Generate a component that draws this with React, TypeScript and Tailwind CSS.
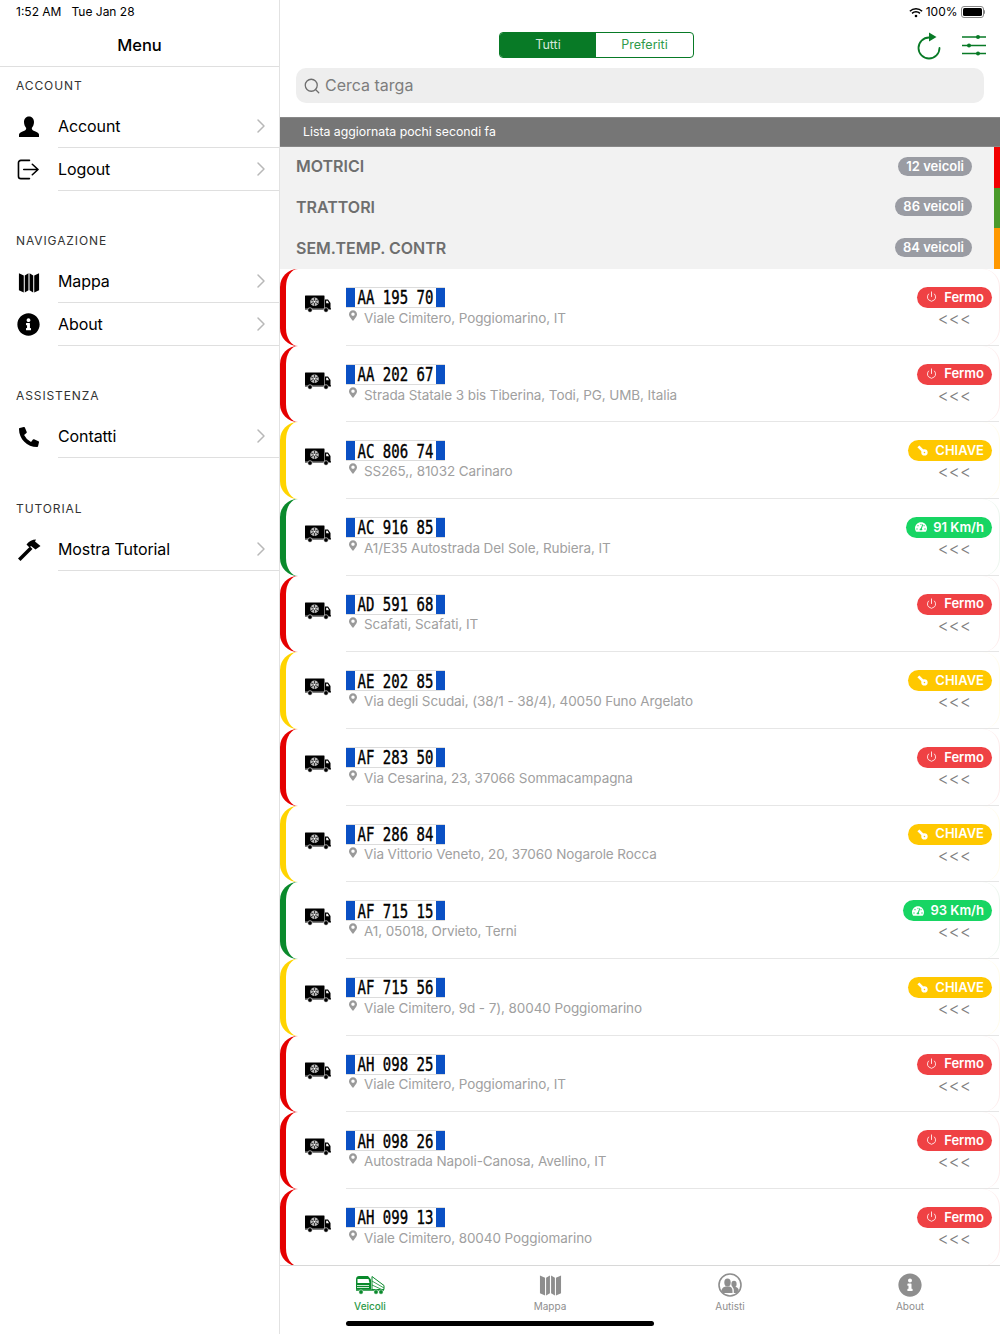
import { ChevronRight, Power, Search } from "lucide-react";
import { FaInfoCircle, FaMapMarkerAlt, FaPhoneAlt, FaTachometerAlt } from "react-icons/fa";

type Vehicle = {
  plate: string;
  address: string;
  status: "fermo" | "chiave" | "speed";
  speed?: string;
};

const vehicles: Vehicle[] = [
  { plate: "AA 195 70", address: "Viale Cimitero, Poggiomarino, IT", status: "fermo" },
  { plate: "AA 202 67", address: "Strada Statale 3 bis Tiberina, Todi, PG, UMB, Italia", status: "fermo" },
  { plate: "AC 806 74", address: "SS265,, 81032 Carinaro", status: "chiave" },
  { plate: "AC 916 85", address: "A1/E35 Autostrada Del Sole, Rubiera, IT", status: "speed", speed: "91 Km/h" },
  { plate: "AD 591 68", address: "Scafati, Scafati, IT", status: "fermo" },
  { plate: "AE 202 85", address: "Via degli Scudai, (38/1 - 38/4), 40050 Funo Argelato", status: "chiave" },
  { plate: "AF 283 50", address: "Via Cesarina, 23, 37066 Sommacampagna", status: "fermo" },
  { plate: "AF 286 84", address: "Via Vittorio Veneto, 20, 37060 Nogarole Rocca", status: "chiave" },
  { plate: "AF 715 15", address: "A1, 05018, Orvieto, Terni", status: "speed", speed: "93 Km/h" },
  { plate: "AF 715 56", address: "Viale Cimitero, 9d - 7), 80040 Poggiomarino", status: "chiave" },
  { plate: "AH 098 25", address: "Viale Cimitero, Poggiomarino, IT", status: "fermo" },
  { plate: "AH 098 26", address: "Autostrada Napoli-Canosa, Avellino, IT", status: "fermo" },
  { plate: "AH 099 13", address: "Viale Cimitero, 80040 Poggiomarino", status: "fermo" },
];

function MapIcon({ className }: { className: string }) {
  return (
    <svg viewBox="0 0 24 24" className={className} fill="currentColor">
      <path d="M1 2.500l5.300 2.500V23.500L1 21z" />
      <path d="M7.400 5L11.400 2.500V21L7.400 23.500z" />
      <path d="M12.600 2.500L16.600 5V23.500L12.600 21z" />
      <path d="M17.700 5L23 2.500V21L17.700 23.500z" />
    </svg>
  );
}

function PersonIcon() {
  return (
    <svg viewBox="0 0 22 22" className="w-[22px] h-[22px]" fill="black">
      <path d="M11 0.500c3.300 0 5 2.500 5 5.500 0 2.500-1 4.700-2.200 6 0 1.500.5 2.300 2.500 3 2.500.9 4.200 1.700 4.700 3.500v2.500H1v-2.500c.5-1.800 2.200-2.600 4.700-3.500 2-.7 2.500-1.500 2.500-3C7 10.700 6 8.500 6 6c0-3 1.700-5.500 5-5.500z" />
    </svg>
  );
}

function LogoutIcon() {
  return (
    <svg viewBox="0 0 24 22" className="w-[23px] h-[21px]" fill="none" stroke="black" strokeWidth="1.700" strokeLinecap="round" strokeLinejoin="round">
      <path d="M13 1.500H4a2.500 2.500 0 0 0-2.500 2.500v14A2.500 2.500 0 0 0 4 20.500h9" />
      <path d="M7 11h15M16 5.500l6 5.500-6 5.500" />
    </svg>
  );
}

function HammerIcon() {
  return (
    <svg viewBox="0 0 24 24" className="w-[24px] h-[24px]" fill="black">
      <path d="M1 20.500L13 8.500l2.500 2.500L3.500 23z" />
      <path d="M9.500 6.500C12 3 15.500 1.500 19 1.500l-1 2 5.500 4.500-5 3.500L14 8l-1.500 1.500z" />
    </svg>
  );
}

function KeyIcon() {
  return (
    <svg viewBox="0 0 14 14" className="w-[11px] h-[11px]" fill="white">
      <circle cx="9.500" cy="9.500" r="4" />
      <path d="M0.500 3L3 0.500 10 7.500 7.500 10z" />
      <circle cx="9.500" cy="9.500" r="1" fill="#ffc800" />
    </svg>
  );
}

function RefreshIcon() {
  return (
    <svg viewBox="0 0 26 28" className="w-[26px] h-[28px]" fill="none" stroke="#087a26" strokeWidth="1.800" strokeLinecap="round">
      <path d="M13 5.500A10.500 10.500 0 1 0 23.500 16" />
      <path d="M13 0.500L20.500 5L13 9.500z" fill="#087a26" stroke="none" />
    </svg>
  );
}

function SlidersIcon() {
  return (
    <svg viewBox="0 0 24 22" className="w-[24px] h-[22px]" fill="#087a26" stroke="#087a26" strokeWidth="1.500">
      <path d="M0 3h24M0 11.500h24M0 19.500h24" />
      <circle cx="16" cy="3" r="2" stroke="none" />
      <circle cx="7" cy="11.500" r="2" stroke="none" />
      <circle cx="16" cy="19.500" r="2" stroke="none" />
    </svg>
  );
}

function ReeferIcon() {
  return (
    <svg viewBox="0 0 26 18" className="w-[26px] h-[18px] shrink-0">
      <rect x="0" y="0.500" width="19.500" height="12.500" rx="0.500" fill="black" />
      <path d="M20 4.500h3l2.500 3.500v6H20z" fill="black" />
      <path d="M21.200 5.700h1.400l1.400 2.500h-2.800z" fill="white" />
      <rect x="0" y="13.300" width="26" height="1.200" fill="black" />
      <circle cx="5" cy="15" r="2.300" fill="black" stroke="white" strokeWidth="0.600" />
      <circle cx="21" cy="15" r="2.300" fill="black" stroke="white" strokeWidth="0.600" />
      <circle cx="9.500" cy="6.800" r="4.300" fill="#bbbbbb" />
      <g stroke="black" strokeWidth="0.700">
        <path d="M9.500 2.800v8M6 4.800l7 4M13 4.800l-7 4" />
      </g>
      <circle cx="9.500" cy="6.800" r="1" fill="white" />
    </svg>
  );
}

function TabTruckIcon() {
  return (
    <svg viewBox="0 0 30 20" className="w-[30px] h-[20px]" fill="none" stroke="#0a8a2c" strokeWidth="1">
      <path d="M1 4.500C1 2.500 2 1 4 1h9l3 3.500v10H1z" fill="#0a8a2c" stroke="none" />
      <path d="M2.500 4h11l1 4h-12z" fill="white" stroke="none" />
      <path d="M2 10.500h12M2 12.500h12" stroke="white" strokeWidth="0.800" />
      <path d="M17 1.500l12 9v4H17z" />
      <path d="M17 6l12 7M17 10l11 5" strokeWidth="0.800" />
      <path d="M1 15h28" strokeWidth="1.500" />
      <circle cx="6" cy="17" r="2.200" fill="#0a8a2c" stroke="white" strokeWidth="0.500" />
      <circle cx="21" cy="17" r="2.200" fill="#0a8a2c" stroke="white" strokeWidth="0.500" />
      <circle cx="26" cy="17" r="2.200" fill="#0a8a2c" stroke="white" strokeWidth="0.500" />
    </svg>
  );
}

function DriversIcon() {
  return (
    <svg viewBox="0 0 24 24" className="w-[24px] h-[24px]">
      <circle cx="12" cy="12" r="11" fill="white" stroke="#8e8e8e" strokeWidth="1.600" />
      <g fill="#8e8e8e">
        <ellipse cx="9.500" cy="9.500" rx="3.200" ry="4" />
        <path d="M3.500 18c0-3 2.500-4 4-4.500h4c1.500.5 3 1.500 3 4.500v2H5z" />
        <ellipse cx="16" cy="11" rx="2.600" ry="3.300" />
        <path d="M15.800 20v-3c0-1-.5-2-1.300-3h3.500c1.500.5 2.700 1.500 2.700 3l-1.500 3z" />
      </g>
    </svg>
  );
}

function MenuSection({ title, children }: { title: string; children: React.ReactNode }) {
  return (
    <section>
      <h2 className="pl-4 h-[12px] flex items-center text-[12px] leading-none tracking-[0.900px] text-[#333]">{title}</h2>
      <div className="mt-[13px]">{children}</div>
    </section>
  );
}

function MenuRow({ icon, label }: { icon: React.ReactNode; label: string }) {
  return (
    <div className="flex h-[43px] items-center">
      <div className="w-[58px] flex justify-center pr-[1px] shrink-0">{icon}</div>
      <div className="flex-1 h-full flex items-center justify-between border-b border-[#dfdfdf] pr-[6px]">
        <span className="text-[16px] tracking-[-0.100px] text-black">{label}</span>
        <ChevronRight className="w-[24px] h-[24px] text-[#b8b8b8]" strokeWidth={1.500} />
      </div>
    </div>
  );
}

function Plate({ text }: { text: string }) {
  return (
    <div className="flex w-[99px] h-[21px] border-y border-[#dcdcdc]">
      <div className="w-[9px] bg-[#0a50c4] shrink-0" />
      <div className="flex-1 flex items-center justify-center overflow-hidden bg-white">
        <span className="font-['DejaVu_Sans_Mono',monospace] text-[14px] leading-none whitespace-pre scale-y-[1.350] [-webkit-text-stroke:0.300px_black] text-black">{text}</span>
      </div>
      <div className="w-[9px] bg-[#0a50c4] shrink-0" />
    </div>
  );
}

function StatusBadge({ vehicle }: { vehicle: Vehicle }) {
  if (vehicle.status === "fermo") {
    return (
      <div className="flex items-center gap-[7px] h-[21px] pl-[9px] pr-[8px] rounded-full bg-[#ef4144] text-white text-[13px] font-semibold">
        <Power className="w-[11px] h-[11px] -mt-[2px]" strokeWidth={1.800} />
        <span>Fermo</span>
      </div>
    );
  }
  if (vehicle.status === "chiave") {
    return (
      <div className="flex items-center gap-[7px] h-[21px] pl-[9px] pr-[8px] rounded-full bg-[#ffc800] text-white text-[13px] font-semibold">
        <KeyIcon />
        <span>CHIAVE</span>
      </div>
    );
  }
  return (
    <div className="flex items-center gap-[6px] h-[21px] pl-[9px] pr-[8px] rounded-full bg-[#17d563] text-white text-[13px] font-semibold">
      <FaTachometerAlt className="w-[12px] h-[12px]" />
      <span>{vehicle.speed}</span>
    </div>
  );
}

function VehicleRow({ vehicle }: { vehicle: Vehicle }) {
  const edge =
    vehicle.status === "fermo"
      ? "border-l-[#e50000] border-r-[#e5000014]"
      : vehicle.status === "chiave"
        ? "border-l-[#ffd400] border-r-[#ffd40014]"
        : "border-l-[#0a8a2c] border-r-[#0a8a2c14]";
  return (
    <div className={`flex h-[76.670px] bg-white rounded-[18px] border-l-[6px] border-r ${edge}`}>
      <div className="w-[60px] shrink-0 pl-[19px] pt-[26px]">
        <ReeferIcon />
      </div>
      <div className="flex-1 flex justify-between border-b border-[#e6e6e6] pr-[7px]">
        <div className="pt-[18px]">
          <Plate text={vehicle.plate} />
          <div className="flex items-center h-[20px]">
            <FaMapMarkerAlt className="w-[8px] h-[11px] text-[#9a9a9a] ml-[3px] -mt-[5px]" />
            <span className="ml-[7px] text-[13.500px] tracking-[-0.090px] text-[#a0a0a0] whitespace-nowrap">{vehicle.address}</span>
          </div>
        </div>
        <div className="pt-[18px] flex flex-col items-end">
          <StatusBadge vehicle={vehicle} />
          <div className="mr-[21px] text-[17px] font-light leading-[22px] text-[#808080]">&lt;&lt;&lt;</div>
        </div>
      </div>
    </div>
  );
}

function GroupRow({ name, count, stripe }: { name: string; count: string; stripe: string }) {
  return (
    <div className={`flex h-[40.670px] items-center justify-between bg-[#f2f2f2] pl-[16px] pr-[22px] pb-[2px] border-r-[6px] ${stripe}`}>
      <span className="text-[16px] font-semibold text-[#6e6e6e]">{name}</span>
      <span className="h-[19px] px-[8px] flex items-center rounded-full bg-[#9a9ca3] text-white text-[13px] font-semibold">{count}</span>
    </div>
  );
}

function Tab({ icon, label, active }: { icon: React.ReactNode; label: string; active?: boolean }) {
  return (
    <div className="flex-1 flex flex-col items-center pt-[7px]">
      <div className="h-[24px] flex items-center justify-center">{icon}</div>
      <span className={`mt-[3px] text-[10px] leading-[12px] ${active ? "text-[#2e9a4a] font-medium" : "text-[#8e8e8e]"}`}>{label}</span>
    </div>
  );
}

export default function App() {
  return (
    <div className="relative flex w-[1000px] h-[1334px] overflow-hidden bg-white font-['Inter',sans-serif]">
      <aside className="w-[280px] shrink-0 border-r border-[#e2e2e2]">
        <div className="h-[24px] pl-4 flex items-center gap-[10px] text-[12px] text-black">
          <span>1:52 AM</span>
          <span>Tue Jan 28</span>
        </div>
        <div className="h-[43px] border-b border-[#dfdfdf] flex items-center justify-center text-[16.500px] font-medium text-black">Menu</div>
        <div className="pt-[13px]">
          <MenuSection title="ACCOUNT">
            <MenuRow icon={<PersonIcon />} label="Account" />
            <MenuRow icon={<LogoutIcon />} label="Logout" />
          </MenuSection>
          <div className="mt-[44px]">
            <MenuSection title="NAVIGAZIONE">
              <MenuRow icon={<MapIcon className="w-[22px] h-[22px] text-black" />} label="Mappa" />
              <MenuRow icon={<FaInfoCircle className="w-[23px] h-[23px] text-black" />} label="About" />
            </MenuSection>
          </div>
          <div className="mt-[44px]">
            <MenuSection title="ASSISTENZA">
              <MenuRow icon={<FaPhoneAlt className="w-[20px] h-[20px] text-black" />} label="Contatti" />
            </MenuSection>
          </div>
          <div className="mt-[45px]">
            <MenuSection title="TUTORIAL">
              <MenuRow icon={<HammerIcon />} label="Mostra Tutorial" />
            </MenuSection>
          </div>
        </div>
      </aside>

      <main className="flex-1 flex flex-col min-w-0">
        <div className="h-[24px] flex items-center justify-end gap-[3px] pr-[15px] text-[12px] text-black">
          <svg viewBox="0 0 16 12" className="w-[14px] h-[11px]" fill="none" stroke="black" strokeWidth="1.700">
            <path d="M1 4.500a10 10 0 0 1 14 0M3.500 7a6.500 6.500 0 0 1 9 0" />
            <circle cx="8" cy="10" r="1.500" fill="black" stroke="none" />
          </svg>
          <span>100%</span>
          <div className="flex items-center">
            <div className="w-[23px] h-[12px] rounded-[3px] border border-[#888] p-[1px]">
              <div className="w-full h-full rounded-[1.500px] bg-black" />
            </div>
            <div className="w-[1.500px] h-[4px] rounded-r bg-[#888]" />
          </div>
        </div>

        <div className="relative h-[44px] pt-[8px] pl-[219px] flex">
          <div className="flex w-[195px] h-[26px] rounded-[4px] border border-[#087a26] overflow-hidden text-[12.500px]">
            <div className="w-[96px] flex items-center justify-center bg-[#087a26] text-[#d5e8da]">Tutti</div>
            <div className="flex-1 flex items-center justify-center text-[#2e9a4a]">Preferiti</div>
          </div>
          <div className="absolute right-[14px] top-[8px] flex items-start gap-[20px]">
            <RefreshIcon />
            <div className="pt-[2px]">
              <SlidersIcon />
            </div>
          </div>
        </div>

        <div className="px-[16px]">
          <div className="flex items-center h-[35px] rounded-[10px] bg-[#eeeeee] pl-[7px]">
            <Search className="w-[18px] h-[18px] text-[#6e6e6e]" strokeWidth={1.700} />
            <span className="ml-[4px] pb-[1px] text-[16px] text-[#7d7d7d]">Cerca targa</span>
          </div>
        </div>

        <div className="mt-[14px] h-[30px] flex items-center pl-[23px] bg-[#767676] border-y border-[#888] text-[12.300px] text-white">
          Lista aggiornata pochi secondi fa
        </div>

        <GroupRow name="MOTRICI" count="12 veicoli" stripe="border-r-[#f20000]" />
        <GroupRow name="TRATTORI" count="86 veicoli" stripe="border-r-[#4a9a2a]" />
        <GroupRow name="SEM.TEMP. CONTR" count="84 veicoli" stripe="border-r-[#ff9800]" />

        <div className="h-[996px] shrink-0 overflow-hidden">
          {vehicles.map((vehicle) => (
            <VehicleRow key={vehicle.plate} vehicle={vehicle} />
          ))}
        </div>

        <div className="flex-1 flex border-t border-[#d8d8d8]">
          <Tab icon={<TabTruckIcon />} label="Veicoli" active />
          <Tab icon={<MapIcon className="w-[23px] h-[23px] text-[#8e8e8e]" />} label="Mappa" />
          <Tab icon={<DriversIcon />} label="Autisti" />
          <Tab icon={<FaInfoCircle className="w-[24px] h-[24px] text-[#8e8e8e]" />} label="About" />
        </div>
      </main>

      <div className="absolute left-[346px] bottom-[8px] w-[308px] h-[5px] rounded-full bg-black" />
    </div>
  );
}
